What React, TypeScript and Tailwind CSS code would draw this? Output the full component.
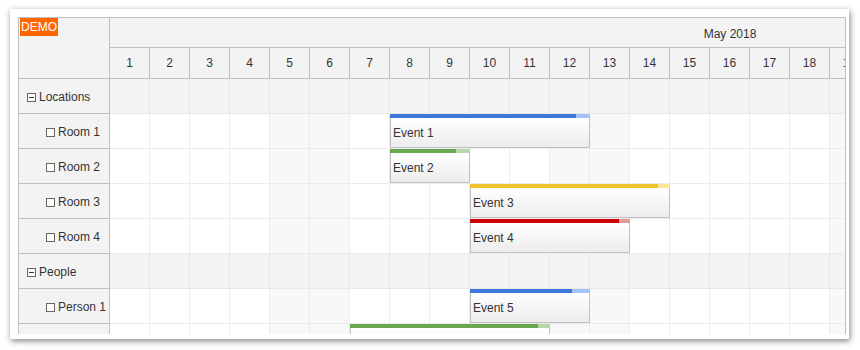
const days = Array.from({ length: 19 }, (_, i) => i + 1);
const weekend = new Set([5, 6, 12, 13, 19]);

type Ev = { text: string; start: number; len: number; done: number; dark: string; light: string };
type Row = { name: string; parent?: boolean; events?: Ev[] };

const rows: Row[] = [
  { name: "Locations", parent: true },
  { name: "Room 1", events: [{ text: "Event 1", start: 8, len: 5, done: 186, dark: "bg-[#3c78d8]", light: "bg-[#a4c2f4]" }] },
  { name: "Room 2", events: [{ text: "Event 2", start: 8, len: 2, done: 66, dark: "bg-[#6aa84f]", light: "bg-[#b6d7a8]" }] },
  { name: "Room 3", events: [{ text: "Event 3", start: 10, len: 5, done: 188, dark: "bg-[#f1c232]", light: "bg-[#ffe599]" }] },
  { name: "Room 4", events: [{ text: "Event 4", start: 10, len: 4, done: 149, dark: "bg-[#cc0000]", light: "bg-[#ea9999]" }] },
  { name: "People", parent: true },
  { name: "Person 1", events: [{ text: "Event 5", start: 10, len: 3, done: 102, dark: "bg-[#3c78d8]", light: "bg-[#a4c2f4]" }] },
  { name: "Person 2", events: [{ text: "Event 6", start: 7, len: 5, done: 188, dark: "bg-[#6aa84f]", light: "bg-[#b6d7a8]" }] },
];

function Expander({ parent }: { parent?: boolean }) {
  return (
    <span className="flex h-[9px] w-[9px] shrink-0 items-center justify-center border border-[#666] bg-white">
      {parent && <span className="h-px w-[5px] bg-[#333]" />}
    </span>
  );
}

function EventBox({ ev }: { ev: Ev }) {
  return (
    <div
      className="absolute top-0 flex h-[34px] flex-col"
      style={{ left: (ev.start - 1) * 40, width: ev.len * 40 }}
    >
      <div className="flex h-[4px] shrink-0">
        <div className={ev.dark} style={{ width: ev.done }} />
        <div className={`flex-1 ${ev.light}`} />
      </div>
      <div className="flex flex-1 items-center border-x border-b border-[#c0c0c0] bg-linear-to-b from-white to-[#ececec] pl-[2px]">
        {ev.text}
      </div>
    </div>
  );
}

export default function App() {
  return (
    <div className="h-[350px] w-[860px] overflow-hidden bg-white pt-[9px] pl-[10px] font-['Liberation_Sans',Arial,sans-serif] text-[12px] text-[#333]">
      <div className="h-[330px] w-[839px] bg-white pt-[8px] pl-[8px] shadow-[1px_2px_6px_rgba(0,0,0,0.5)]">
        <div className="flex h-[317px] w-[828px] flex-col overflow-hidden border-x border-t border-[#c0c0c0] bg-white">
          {/* header */}
          <div className="flex shrink-0 border-b border-[#c0c0c0] bg-[#f3f3f3]">
            <div className="relative h-[60px] w-[91px] shrink-0 border-r border-[#c0c0c0]">
              <span className="absolute top-0 left-[1px] bg-[#ff6600] px-px leading-[18px] text-white">DEMO</span>
            </div>
            <div className="flex-1 overflow-hidden">
              <div className="flex h-[30px] w-[1240px] items-center justify-center border-b border-[#c0c0c0] pt-[2px]">
                May 2018
              </div>
              <div className="flex h-[30px]">
                {days.map((d) => (
                  <div key={d} className="flex w-[40px] shrink-0 items-center justify-center border-r border-[#c0c0c0]">
                    {d}
                  </div>
                ))}
              </div>
            </div>
          </div>
          {/* rows */}
          {rows.map((r) => (
            <div key={r.name} className="flex h-[35px] shrink-0">
              <div
                className={`flex w-[91px] shrink-0 items-center gap-[3px] border-r border-b border-[#c0c0c0] bg-[#f3f3f3] pt-[2px] ${
                  r.parent ? "pl-[8px]" : "pl-[27px]"
                }`}
              >
                <Expander parent={r.parent} />
                <span>{r.name}</span>
              </div>
              <div className="relative flex flex-1 overflow-hidden">
                {days.map((d) => (
                  <div
                    key={d}
                    className={`w-[40px] shrink-0 border-r border-b ${
                      r.parent
                        ? "border-[#e8e8e8] bg-[#f3f3f3]"
                        : weekend.has(d)
                          ? "border-[#ececec] bg-[#f8f8f8]"
                          : "border-[#ececec] bg-white"
                    }`}
                  />
                ))}
                {r.events?.map((ev) => <EventBox key={ev.text} ev={ev} />)}
              </div>
            </div>
          ))}
        </div>
      </div>
    </div>
  );
}
